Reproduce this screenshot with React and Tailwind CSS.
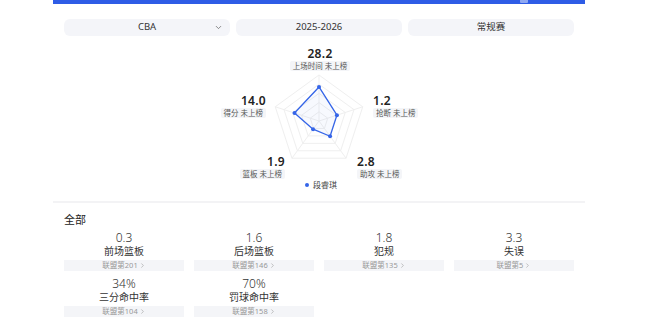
import { ChevronDown, ChevronRight } from "lucide-react";

const FONT = { fontFamily: '"Noto Sans", "Noto Sans CJK SC", sans-serif' };

const AXES = [
  { key: "time", ratio: 0.74 },
  { key: "steal", ratio: 0.41 },
  { key: "assist", ratio: 0.41 },
  { key: "rebound", ratio: 0.22 },
  { key: "points", ratio: 0.56 },
];

const STATS = [
  { value: "0.3", label: "前场篮板", rank: 201 },
  { value: "1.6", label: "后场篮板", rank: 146 },
  { value: "1.8", label: "犯规", rank: 135 },
  { value: "3.3", label: "失误", rank: 5 },
  { value: "34%", label: "三分命中率", rank: 104 },
  { value: "70%", label: "罚球命中率", rank: 158 },
];

const CX = 266;
const CY = 85;
const R = 46;

const pt = (i, r) => {
  const a = (-90 + i * 72) * (Math.PI / 180);
  return [CX + r * Math.cos(a), CY + r * Math.sin(a)];
};

const ring = (r) => [0, 1, 2, 3, 4].map((i) => pt(i, r).join(",")).join(" ");

const Radar = () => {
  const data = AXES.map((a, i) => pt(i, a.ratio * R));
  return (
    <svg className="absolute left-0 top-0" width="532" height="165">
      {[1, 0.8, 0.6, 0.4, 0.2].map((f) => (
        <polygon key={f} points={ring(R * f)} fill="none" stroke="#efefef" strokeWidth="1" />
      ))}
      {[0, 1, 2, 3, 4].map((i) => {
        const [x, y] = pt(i, R);
        return <line key={i} x1={CX} y1={CY} x2={x} y2={y} stroke="#efefef" strokeWidth="1" />;
      })}
      <polygon
        points={data.map((p) => p.join(",")).join(" ")}
        fill="rgba(46,92,230,0.04)"
        stroke="#3565e8"
        strokeWidth="1.3"
        strokeLinejoin="round"
      />
      {data.map(([x, y], i) => (
        <circle key={i} cx={x} cy={y} r="2" fill="#3565e8" />
      ))}
    </svg>
  );
};

const Tag = ({ children }) => (
  <span className="rounded-[2px] bg-[#f4f5f8] px-[3px] text-[7.5px] leading-[10px] text-[#555]">
    {children}
  </span>
);

const Value = ({ children }) => (
  <span className="text-[12px] font-semibold leading-[13px] tracking-[0.3px] text-[#222]">{children}</span>
);

export default function App() {
  return (
    <div className="relative h-[321px] w-[660px] overflow-hidden bg-white" style={FONT}>
      <div className="ml-[53px] w-[532px]">
        {/* 顶部蓝条 */}
        <div className="relative h-[4px] bg-[#2e5ce6]">
          <div className="absolute left-[467px] top-0 h-[3px] w-[8px] rounded-b-[1px] bg-[#8fa8f2]" />
        </div>

        {/* 筛选 */}
        <div className="mt-[15px] grid grid-cols-3 gap-[6px] px-[11px]">
          <div className="relative flex h-[17px] items-center justify-center rounded-[6px] bg-[#f4f5f9] text-[9.5px] text-[#333]">
            CBA
            <ChevronDown className="absolute right-[7px] h-[9px] w-[9px] text-[#666]" strokeWidth={2} />
          </div>
          <div className="flex h-[17px] items-center justify-center rounded-[6px] bg-[#f4f5f9] text-[9.5px] text-[#333]">
            2025-2026
          </div>
          <div className="flex h-[17px] items-center justify-center rounded-[6px] bg-[#f4f5f9] text-[9.5px] text-[#333]">
            常规赛
          </div>
        </div>

        {/* 雷达图 */}
        <div className="relative h-[165px]">
          <Radar />
          <div className="absolute left-[217px] top-[11px] flex w-[100px] flex-col items-center gap-[1px]">
            <Value>28.2</Value>
            <Tag>上场时间 未上榜</Tag>
          </div>
          <div className="absolute left-[163px] top-[58px] flex w-[50px] flex-col items-end gap-[1px]">
            <Value>14.0</Value>
            <Tag>得分 未上榜</Tag>
          </div>
          <div className="absolute left-[320px] top-[58px] flex w-[60px] flex-col items-start gap-[1px]">
            <Value>1.2</Value>
            <Tag>抢断 未上榜</Tag>
          </div>
          <div className="absolute left-[182px] top-[119px] flex w-[50px] flex-col items-end gap-[1px]">
            <Value>1.9</Value>
            <Tag>篮板 未上榜</Tag>
          </div>
          <div className="absolute left-[304px] top-[119px] flex w-[60px] flex-col items-start gap-[1px]">
            <Value>2.8</Value>
            <Tag>助攻 未上榜</Tag>
          </div>
          <div className="absolute left-[252px] top-[144px] flex items-center gap-[4px] text-[8px] leading-[10px] text-[#444]">
            <span className="h-[4px] w-[4px] rounded-full bg-[#3565e8]" />
            段睿琪
          </div>
        </div>

        <div className="h-[2px] bg-[#f3f3f5]" />

        {/* 全部数据 */}
        <div className="px-[11px] pt-[10px]">
          <p className="text-[11px] leading-[14px] text-[#222]">全部</p>
          <div className="mt-[4px] grid grid-cols-4 gap-x-[10px] gap-y-[6px]">
            {STATS.map((s) => (
              <div key={s.label} className="flex flex-col items-center">
                <span className="text-[12px] font-light leading-[13px] text-[#333]">{s.value}</span>
                <span className="mt-[1px] text-[10px] leading-[13px] text-[#333]">{s.label}</span>
                <div className="mt-[2px] flex h-[11px] w-full items-center justify-center bg-[#f4f5f8] text-[7.5px] text-[#999]">
                  联盟第{s.rank}
                  <ChevronRight className="ml-[1px] h-[7px] w-[7px]" strokeWidth={2} />
                </div>
              </div>
            ))}
          </div>
        </div>
      </div>
    </div>
  );
}
